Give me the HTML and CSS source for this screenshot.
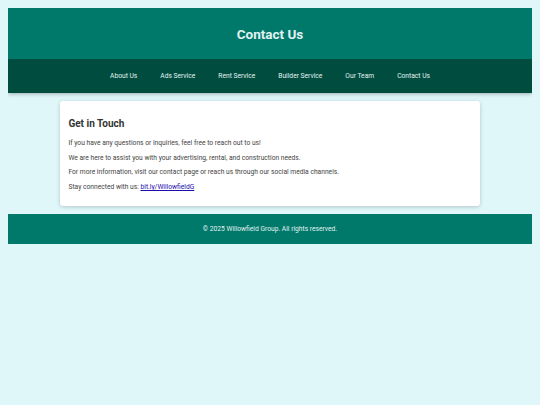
FILE: index.html
```html
<!DOCTYPE html>
<html lang="en">
<head>
<meta charset="utf-8">
<title>Contact Us</title>
<link rel="stylesheet" href="styles.css">
</head>
<body>
<header class="site-header">
  <div class="title-bar"><h1>Contact Us</h1></div>
  <nav class="main-nav">
    <a href="#">About Us</a>
    <a href="#">Ads Service</a>
    <a href="#">Rent Service</a>
    <a href="#">Builder Service</a>
    <a href="#">Our Team</a>
    <a href="#">Contact Us</a>
  </nav>
</header>
<main class="card">
  <h2>Get in Touch</h2>
  <p>If you have any questions or inquiries, feel free to reach out to us!</p>
  <p>We are here to assist you with your advertising, rental, and construction needs.</p>
  <p>For more information, visit our contact page or reach us through our social media channels.</p>
  <p>Stay connected with us: <a href="#">bit.ly/WillowfieldG</a></p>
</main>
<footer class="site-footer">© 2025 Willowfield Group. All rights reserved.</footer>
</body>
</html>
```
FILE: styles.css
```css
body {
  margin: 8px;
  background: #e0f7fa;
  font-family: Roboto, "Liberation Sans", sans-serif;
  color: #333;
}
.site-header {
  box-shadow: 0 1px 4px rgba(0,0,0,0.3);
}
.title-bar {
  background: #00796b;
  height: 51px;
  display: flex;
  align-items: center;
  justify-content: center;
}
.title-bar h1 {
  margin: 0;
  font-size: 13.5px;
  font-weight: 700;
  color: #e0f2f1;
}
.main-nav {
  background: #004d40;
  height: 34px;
  display: flex;
  align-items: center;
  justify-content: center;
  gap: 23px;
}
.main-nav a {
  color: #e0f2f1;
  text-decoration: none;
  font-size: 6.7px;
}
.card {
  display: block;
  width: 80%;
  box-sizing: border-box;
  margin: 8px auto;
  background: #fff;
  border-radius: 3px;
  padding: 9px 8px 15px;
  box-shadow: 0 1px 4px rgba(0,0,0,0.2);
}
.card h2 {
  margin: 8px 0 10px;
  font-size: 10px;
  font-weight: 700;
  color: #333;
}
.card p {
  margin: 0 0 6.7px;
  font-size: 6.7px;
  line-height: 8px;
  color: #444;
}
.card p:last-child { margin-bottom: 0; }
.card a { color: #1a0dab; }
.site-footer {
  background: #00796b;
  color: #e0f2f1;
  height: 30px;
  display: flex;
  align-items: center;
  justify-content: center;
  font-size: 6.7px;
}
```
